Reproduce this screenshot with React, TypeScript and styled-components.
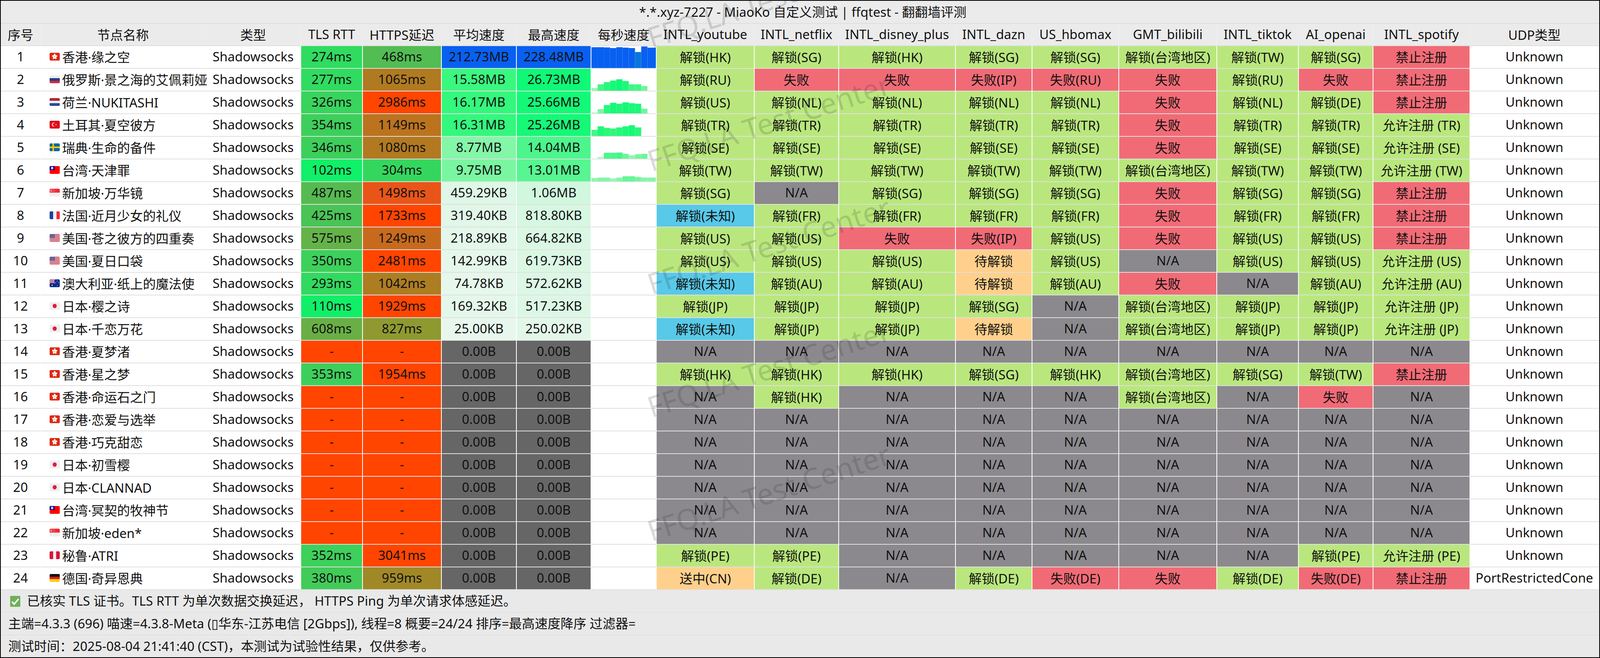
import styled, { createGlobalStyle } from "styled-components";

const GlobalStyle = createGlobalStyle`
    html, body {
        margin: 0;
        padding: 0;
        background: #000;
    }
    * {
        box-sizing: border-box;
    }
`;

const COLUMNS = [103, 422, 244, 158, 202, 192, 191, 167, 251, 216, 299, 196, 222, 251, 209, 191, 248, 330];

const Frame = styled.div`
    position: relative;
    width: 100vw;
    height: 1684px;
    border: 2px solid #000;
    overflow: hidden;
    background: #ebebeb;
    color: #111;
    font-family: "Noto Sans", "Noto Sans CJK SC", sans-serif;
    font-size: 33px;
`;

const Table = styled.div`
    display: grid;
    grid-template-columns: ${COLUMNS.map((c) => `minmax(0, ${c}fr)`).join(" ")};
    grid-template-rows: 59px 57px;
    grid-auto-rows: 58px;
`;

const Title = styled.div`
    grid-column: 1 / -1;
    display: flex;
    align-items: center;
    justify-content: center;
    padding-left: 14px;
    padding-bottom: 4px;
    border-bottom: 2px solid #dedede;
`;

const HeadCell = styled.div`
    display: flex;
    align-items: center;
    justify-content: center;
    white-space: nowrap;
    padding-bottom: 2px;
    border-bottom: 2px solid #dedede;
    border-right: 2px solid #eeeeee;
`;

const Cell = styled.div<{ $bg?: string }>`
    display: flex;
    align-items: center;
    justify-content: center;
    white-space: nowrap;
    padding-bottom: 3px;
    background-color: ${(props) => props.$bg ?? "#ffffff"};
    background-clip: padding-box;
    border-right: 2px solid #ffffff;
    border-bottom: 2px solid #e0e0e0;
`;

const NameCell = styled(Cell)`
    position: relative;
    z-index: 1;
    justify-content: flex-start;
    padding-left: 22px;
    gap: 6px;
`;

const SparkCell = styled(Cell)`
    align-items: stretch;
    justify-content: flex-start;
    padding-bottom: 0;
`;

const Spark = styled.svg`
    display: block;
    width: 100%;
    height: 56px;
`;

const FlagIcon = styled.svg`
    flex: none;
    width: 26px;
    height: 20px;
    border-radius: 3px;
`;

const Footer = styled.div`
    display: grid;
    grid-template-rows: 58px 58px 56px;
`;

const FootLine = styled.div`
    display: flex;
    align-items: center;
    padding-left: 19px;
    padding-bottom: 4px;
    white-space: pre;
    background: #e9e9e9;
    border-bottom: 2px solid #e2e2e2;

    &:last-child {
        border-bottom: none;
    }
`;

const Check = styled.svg`
    flex: none;
    width: 26px;
    height: 28px;
    margin: 6px 17px 0 5px;
`;

const Stamp = styled.div<{ $top: number }>`
    position: absolute;
    z-index: 2;
    left: 1665px;
    top: ${(props) => props.$top}px;
    font-size: 74px;
    line-height: 74px;
    white-space: nowrap;
    color: rgba(30, 30, 30, 0.16);
    transform: rotate(-18deg);
    transform-origin: 0 62px;
    pointer-events: none;
`;

const HEADERS = [
    "序号", "节点名称", "类型", "TLS RTT", "HTTPS延迟", "平均速度", "最高速度", "每秒速度",
    "INTL_youtube", "INTL_netflix", "INTL_disney_plus", "INTL_dazn", "US_hbomax",
    "GMT_bilibili", "INTL_tiktok", "AI_openai", "INTL_spotify", "UDP类型",
];

interface INode {
    flag: string;
    name: string;
    tls: number;
    https: number;
    avg: string;
    max: string;
    spark?: number[];
    unlock: string;
    udp?: string;
}

const ALL_NA = "na na na na na na na na na";

const NODES: INode[] = [
    { flag: "hk", name: "香港·缘之空", tls: 274, https: 468, avg: "212.73MB", max: "228.48MB", spark: [0.95, 0.95, 0.94, 0.91, 0.95, 0.93, 0.91, 0.73, 0.985, 0.93], unlock: "HK SG HK SG SG twa TW SG ban" },
    { flag: "ru", name: "俄罗斯·景之海的艾佩莉娅", tls: 277, https: 1065, avg: "15.58MB", max: "26.73MB", spark: [0.125, 0.29, 0.39, 0.46, 0.52, 0.44, 0.29, 0.29, 0.21], unlock: "RU x x x:IP x:RU x RU x ban" },
    { flag: "nl", name: "荷兰·NUKITASHI", tls: 326, https: 2986, avg: "16.17MB", max: "25.66MB", spark: [0.05, 0.19, 0.38, 0.48, 0.44, 0.5, 0.46, 0.44, 0.21], unlock: "US NL NL NL NL x NL DE ban" },
    { flag: "tr", name: "土耳其·夏空彼方", tls: 354, https: 1149, avg: "16.31MB", max: "25.26MB", spark: [0.28, 0.44, 0.37, 0.34, 0.39, 0.44, 0.49, 0.39], unlock: "TR TR TR TR TR x TR TR ok:TR" },
    { flag: "se", name: "瑞典·生命的备件", tls: 346, https: 1080, avg: "8.77MB", max: "14.04MB", spark: [0, 0.08, 0.27, 0.27, 0.28, 0.22, 0.15, 0.2, 0.22], unlock: "SE SE SE SE SE x SE SE ok:SE" },
    { flag: "tw", name: "台湾·天津罪", tls: 102, https: 304, avg: "9.75MB", max: "13.01MB", spark: [0.15, 0.17, 0.17, 0.13, 0.17, 0.23, 0.23, 0.2, 0.17, 0.17], unlock: "TW TW TW TW TW twa TW TW ok:TW" },
    { flag: "sg", name: "新加坡·万华镜", tls: 487, https: 1498, avg: "459.29KB", max: "1.06MB", unlock: "SG na SG SG SG x SG SG ban" },
    { flag: "fr", name: "法国·近月少女的礼仪", tls: 425, https: 1733, avg: "319.40KB", max: "818.80KB", unlock: "unk FR FR FR FR x FR FR ban" },
    { flag: "us", name: "美国·苍之彼方的四重奏", tls: 575, https: 1249, avg: "218.89KB", max: "664.82KB", unlock: "US US x x:IP US x US US ban" },
    { flag: "us", name: "美国·夏日口袋", tls: 350, https: 2481, avg: "142.99KB", max: "619.73KB", unlock: "US US US wait US na US US ok:US" },
    { flag: "au", name: "澳大利亚·纸上的魔法使", tls: 293, https: 1042, avg: "74.78KB", max: "572.62KB", unlock: "unk AU AU wait AU x na AU ok:AU" },
    { flag: "jp", name: "日本·樱之诗", tls: 110, https: 1929, avg: "169.32KB", max: "517.23KB", unlock: "JP JP JP SG na twa JP JP ok:JP" },
    { flag: "jp", name: "日本·千恋万花", tls: 608, https: 827, avg: "25.00KB", max: "250.02KB", unlock: "unk JP JP wait na twa JP JP ok:JP" },
    { flag: "hk", name: "香港·夏梦渚", tls: 0, https: 0, avg: "0.00B", max: "0.00B", unlock: ALL_NA },
    { flag: "hk", name: "香港·星之梦", tls: 353, https: 1954, avg: "0.00B", max: "0.00B", unlock: "HK HK HK SG HK twa SG TW ban" },
    { flag: "hk", name: "香港·命运石之门", tls: 0, https: 0, avg: "0.00B", max: "0.00B", unlock: "na HK na na na twa na x na" },
    { flag: "hk", name: "香港·恋爱与选举", tls: 0, https: 0, avg: "0.00B", max: "0.00B", unlock: ALL_NA },
    { flag: "hk", name: "香港·巧克甜恋", tls: 0, https: 0, avg: "0.00B", max: "0.00B", unlock: ALL_NA },
    { flag: "jp", name: "日本·初雪樱", tls: 0, https: 0, avg: "0.00B", max: "0.00B", unlock: ALL_NA },
    { flag: "jp", name: "日本·CLANNAD", tls: 0, https: 0, avg: "0.00B", max: "0.00B", unlock: ALL_NA },
    { flag: "tw", name: "台湾·冥契的牧神节", tls: 0, https: 0, avg: "0.00B", max: "0.00B", unlock: ALL_NA },
    { flag: "sg", name: "新加坡·eden*", tls: 0, https: 0, avg: "0.00B", max: "0.00B", unlock: ALL_NA },
    { flag: "pe", name: "秘鲁·ATRI", tls: 352, https: 3041, avg: "0.00B", max: "0.00B", unlock: "PE PE na na na na na PE ok:PE" },
    { flag: "de", name: "德国·奇异恩典", tls: 380, https: 959, avg: "0.00B", max: "0.00B", unlock: "cn DE na DE x:DE x DE x:DE ban", udp: "PortRestrictedCone" },
];

const GREEN = "#b9e77d";
const RED = "#f16b76";
const GRAY = "#8b898d";
const BLUE = "#58c9e8";
const ORANGE = "#ffd08c";

function unlockCell(code: string): [string, string] {
    if (code === "na") return ["N/A", GRAY];
    if (code === "x") return ["失败", RED];
    if (code.startsWith("x:")) return [`失败(${code.slice(2)})`, RED];
    if (code === "ban") return ["禁止注册", RED];
    if (code.startsWith("ok:")) return [`允许注册 (${code.slice(3)})`, GREEN];
    if (code === "wait") return ["待解锁", ORANGE];
    if (code === "cn") return ["送中(CN)", ORANGE];
    if (code === "unk") return ["解锁(未知)", BLUE];
    if (code === "twa") return ["解锁(台湾地区)", GREEN];
    return [`解锁(${code})`, GREEN];
}

type Stop = [number, number, number, number];

const LATENCY: Stop[] = [
    [0, 0, 255, 106],
    [102, 16, 240, 104],
    [274, 47, 220, 96],
    [468, 82, 189, 83],
    [827, 142, 154, 48],
    [1065, 176, 122, 32],
    [1498, 233, 85, 24],
    [1700, 255, 69, 0],
];

const SPEED: Stop[] = [
    [0, 232, 247, 237],
    [1, 210, 247, 222],
    [9.75, 122, 246, 161],
    [14, 76, 246, 140],
    [16, 53, 247, 125],
    [26, 18, 249, 119],
    [30, 0, 250, 120],
    [200, 8, 96, 240],
];

function ramp(stops: Stop[], value: number) {
    const last = stops[stops.length - 1];
    if (value >= last[0]) return `rgb(${last[1]},${last[2]},${last[3]})`;
    const i = stops.findIndex((s) => s[0] > value);
    const a = stops[i - 1];
    const b = stops[i];
    const t = (value - a[0]) / (b[0] - a[0]);
    const mix = (n: number) => Math.round(a[n] + (b[n] - a[n]) * t);
    return `rgb(${mix(1)},${mix(2)},${mix(3)})`;
}

function speedColor(label: string) {
    const n = parseFloat(label);
    if (n === 0) return "#666666";
    return ramp(SPEED, label.endsWith("MB") ? n : n / 1024);
}

function barColor(h: number) {
    return ramp(SPEED, h >= 0.7 ? h * 240 : h * 52);
}

function Flag({ code }: { code: string }) {
    return (
        <FlagIcon viewBox="0 0 28 20" preserveAspectRatio="none">
            {code === "hk" && (
                <>
                    <rect width="28" height="20" fill="#de2910" />
                    {[0, 72, 144, 216, 288].map((a) => (
                        <ellipse key={a} cx="14" cy="6.2" rx="2.3" ry="3.6" fill="#fff" transform={`rotate(${a} 14 10)`} />
                    ))}
                    <circle cx="14" cy="10" r="1" fill="#de2910" />
                </>
            )}
            {code === "ru" && (
                <>
                    <rect width="28" height="7" fill="#eeeeee" />
                    <rect y="7" width="28" height="7" fill="#223e8f" />
                    <rect y="14" width="28" height="6" fill="#d52b3a" />
                </>
            )}
            {code === "nl" && (
                <>
                    <rect width="28" height="7" fill="#ae2a38" />
                    <rect y="7" width="28" height="6" fill="#eeeeee" />
                    <rect y="13" width="28" height="7" fill="#2a4a96" />
                </>
            )}
            {code === "tr" && (
                <>
                    <rect width="28" height="20" fill="#e30a17" />
                    <circle cx="11.5" cy="10" r="5" fill="#fff" />
                    <circle cx="13" cy="10" r="4" fill="#e30a17" />
                    <polygon points="15.5,10 19.5,8.6 17.1,12.1 17.1,7.9 19.5,11.4" fill="#fff" />
                </>
            )}
            {code === "se" && (
                <>
                    <rect width="28" height="20" fill="#0a68a8" />
                    <rect x="8" width="4" height="20" fill="#fecc00" />
                    <rect y="8" width="28" height="4" fill="#fecc00" />
                </>
            )}
            {code === "tw" && (
                <>
                    <rect width="28" height="20" fill="#fe0000" />
                    <rect width="14" height="10" fill="#000095" />
                    <circle cx="7" cy="5" r="3.2" fill="#fff" />
                    <circle cx="7" cy="5" r="1.8" fill="#000095" />
                    <circle cx="7" cy="5" r="1.4" fill="#fff" />
                </>
            )}
            {code === "sg" && (
                <>
                    <rect width="28" height="10" fill="#ed2939" />
                    <rect y="10" width="28" height="10" fill="#eeeeee" />
                    <circle cx="6" cy="5" r="3.3" fill="#fff" />
                    <circle cx="7.4" cy="5" r="3" fill="#ed2939" />
                    {[[10, 3], [13, 3], [9, 6], [14, 6], [11.5, 7.6]].map(([x, y]) => (
                        <circle key={x} cx={x} cy={y} r="0.7" fill="#fff" />
                    ))}
                </>
            )}
            {code === "fr" && (
                <>
                    <rect width="10" height="20" fill="#1f3f9c" />
                    <rect x="10" width="9" height="20" fill="#eeeeee" />
                    <rect x="19" width="9" height="20" fill="#ed2939" />
                </>
            )}
            {code === "us" && (
                <>
                    <rect width="28" height="20" fill="#eeeeee" />
                    {[0, 3, 6, 9, 12, 15, 18].map((y) => (
                        <rect key={y} y={y} width="28" height="1.6" fill="#c8223a" />
                    ))}
                    <rect width="14" height="10.5" fill="#4a4c86" />
                    {[1.5, 3.5, 5.5, 7.5, 9].map((y) =>
                        [1.5, 4, 6.5, 9, 11.5].map((x) => (
                            <circle key={`${x}-${y}`} cx={x} cy={y} r="0.6" fill="#e0e0ee" />
                        ))
                    )}
                </>
            )}
            {code === "au" && (
                <>
                    <rect width="28" height="20" fill="#0a2a8a" />
                    <rect width="14" height="10" fill="#1a2f86" />
                    <path d="M0 0L14 10M14 0L0 10" stroke="#fff" strokeWidth="2" />
                    <path d="M0 0L14 10M14 0L0 10" stroke="#d8233c" strokeWidth="0.8" />
                    <path d="M7 0V10M0 5H14" stroke="#fff" strokeWidth="3" />
                    <path d="M7 0V10M0 5H14" stroke="#d8233c" strokeWidth="1.6" />
                    {[[7, 15, 1.6], [21, 4, 0.9], [25, 8, 0.9], [21, 16, 0.9], [17, 9, 0.9]].map(([x, y, r]) => (
                        <circle key={x} cx={x} cy={y} r={r} fill="#fff" />
                    ))}
                </>
            )}
            {code === "jp" && (
                <>
                    <rect width="28" height="20" fill="#eeeeee" />
                    <circle cx="14" cy="10" r="5.6" fill="#e8173f" />
                </>
            )}
            {code === "pe" && (
                <>
                    <rect width="10" height="20" fill="#d9133a" />
                    <rect x="10" width="8" height="20" fill="#eeeeee" />
                    <rect x="18" width="10" height="20" fill="#d9133a" />
                </>
            )}
            {code === "de" && (
                <>
                    <rect width="28" height="7" fill="#111111" />
                    <rect y="7" width="28" height="6" fill="#dd1c1c" />
                    <rect y="13" width="28" height="7" fill="#ffce00" />
                </>
            )}
        </FlagIcon>
    );
}

function Row({ node, index }: { node: INode; index: number }) {
    const bars = node.spark ?? [];
    return (
        <>
            <Cell>{index}</Cell>
            <NameCell>
                <Flag code={node.flag} />
                {node.name}
            </NameCell>
            <Cell>Shadowsocks</Cell>
            <Cell $bg={node.tls ? ramp(LATENCY, node.tls) : "#ff4500"}>{node.tls ? `${node.tls}ms` : "-"}</Cell>
            <Cell $bg={node.https ? ramp(LATENCY, node.https) : "#ff4500"}>{node.https ? `${node.https}ms` : "-"}</Cell>
            <Cell $bg={speedColor(node.avg)}>{node.avg}</Cell>
            <Cell $bg={speedColor(node.max)}>{node.max}</Cell>
            <SparkCell>
                <Spark viewBox="0 0 176 56" preserveAspectRatio="none">
                    {bars.map((h, n) => (
                        <rect key={n} x={n * 17} y={56 - h * 56} width={n === 9 ? 23 : 17} height={h * 56} fill={barColor(h)} />
                    ))}
                </Spark>
            </SparkCell>
            {node.unlock.split(" ").map((code, n) => {
                const [label, bg] = unlockCell(code);
                return (
                    <Cell key={n} $bg={bg}>
                        {label}
                    </Cell>
                );
            })}
            <Cell>{node.udp ?? "Unknown"}</Cell>
        </>
    );
}

function App() {
    return (
        <Frame>
            <GlobalStyle />
            <Table>
                <Title>*.*.xyz-7227 - MiaoKo 自定义测试 | ffqtest - 翻翻墙评测</Title>
                {HEADERS.map((h) => (
                    <HeadCell key={h}>{h}</HeadCell>
                ))}
                {NODES.map((node, i) => (
                    <Row key={node.name} node={node} index={i + 1} />
                ))}
            </Table>
            <Footer>
                <FootLine>
                    <Check viewBox="0 0 28 28" preserveAspectRatio="none">
                        <rect width="28" height="28" rx="2" fill="#6fb15a" />
                        <path d="M5 15l6 6L23 8" fill="none" stroke="#fff" strokeWidth="4" />
                    </Check>
                    已核实 TLS 证书。TLS RTT 为单次数据交换延迟， HTTPS Ping 为单次请求体感延迟。
                </FootLine>
                <FootLine>主端=4.3.3 (696) 喵速=4.3.8-Meta (▯华东-江苏电信 [2Gbps]), 线程=8 概要=24/24 排序=最高速度降序 过滤器=</FootLine>
                <FootLine>测试时间：2025-08-04 21:41:40 (CST)，本测试为试验性结果，仅供参考。</FootLine>
            </Footer>
            {[58, 373, 688, 1003, 1320].map((top) => (
                <Stamp key={top} $top={top}>FFQ.LA Test Center</Stamp>
            ))}
        </Frame>
    );
}

export default App;
